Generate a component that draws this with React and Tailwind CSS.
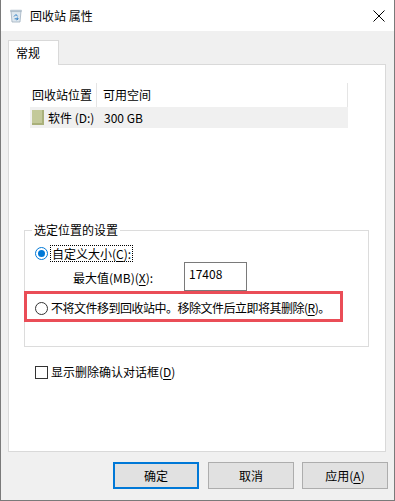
import React from 'react';

// Windows 10 style "回收站 属性" dialog

const RecycleIcon = () => (
  <svg width="14" height="15" viewBox="0 0 14 15">
    <path d="M2 3 L12 3 L11 14 L3 14 Z" fill="#dfe8ef" stroke="#9fb0bf" strokeWidth="0.8" />
    <path d="M1.5 2.2 L12.5 2.2 L12.3 3.6 L1.7 3.6 Z" fill="#c9d6e0" stroke="#9fb0bf" strokeWidth="0.6" />
    <path d="M5 8.5 L7 6.5 L8.6 8.4 M5.6 10.8 L8.6 10.8 M8.2 9.4 L9.2 11 L7.4 11.9" fill="none" stroke="#2f7fc4" strokeWidth="1" />
  </svg>
);

const Radio = ({ checked }) => (
  <span
    className={`flex h-[13px] w-[13px] shrink-0 items-center justify-center rounded-full border bg-white ${
      checked ? 'border-[#0078d7]' : 'border-[#333333]'
    }`}
  >
    {checked && <span className="h-[7px] w-[7px] rounded-full bg-[#0078d7]" />}
  </span>
);

const U = ({ children }) => <span className="underline underline-offset-2">{children}</span>;

const Button = ({ children, primary }) => (
  <div
    className={`flex h-[27px] w-[86px] items-center justify-center bg-[#e1e1e1] ${
      primary ? 'border-2 border-[#0078d7]' : 'border border-[#adadad]'
    }`}
  >
    {children}
  </div>
);

export default function App() {
  return (
    <div className="flex h-[501px] w-[395px] flex-col border-x border-b border-[#7a7a7a] bg-[#f0f0f0] font-['Microsoft_YaHei','Noto_Sans_CJK_SC',sans-serif] text-[12px] leading-[16px] text-black">
      {/* title bar */}
      <div className="flex h-[31px] shrink-0 items-center bg-white">
        <div className="ml-[8px] flex w-[14px] justify-center">
          <RecycleIcon />
        </div>
        <span className="ml-[7px]">回收站 属性</span>
        <div className="ml-auto mr-[9px] flex h-[12px] w-[12px] items-center justify-center">
          <svg width="12" height="12" viewBox="0 0 12 12">
            <path d="M0.5 0.5 L11.5 11.5 M11.5 0.5 L0.5 11.5" stroke="#000" strokeWidth="1" />
          </svg>
        </div>
      </div>

      {/* tabs + panel */}
      <div className="flex flex-col pl-[7px] pr-[8px]">
        <div className="mt-[9px] flex">
          <div className="relative z-10 -mb-px flex h-[25px] w-[51px] items-start border-x border-t border-[#d9d9d9] bg-white pl-[7px] pt-[4px]">
            常规
          </div>
        </div>
        <div className="flex h-[388px] flex-col border border-[#d9d9d9] bg-white">
          {/* list view */}
          <div className="ml-[21px] mt-[18px] flex w-[318px] flex-col">
            <div className="flex h-[24px] items-center">
              <div className="flex h-full w-[67px] items-center border-r border-[#e5e5e5] pl-[2px]">回收站位置</div>
              <div className="flex h-full flex-1 items-center border-r border-[#e5e5e5] pl-[6px]">可用空间</div>
            </div>
            <div className="flex h-[21px] items-center bg-[#f0f0f0]">
              <div className="flex w-[67px] items-center pl-[2px]">
                <span className="h-[15px] w-[12px] border-b-2 border-r-2 border-[#a9b07a] bg-[#c3c99a]" />
                <span className="ml-[4px]">软件 (D:)</span>
              </div>
              <div className="pl-[7px]">300 GB</div>
            </div>
          </div>

          {/* settings group */}
          <fieldset className="ml-[15px] mt-[94px] w-[345px] border border-[#dcdcdc] pb-[24px] pl-[10px] pt-[7px]">
            <legend className="ml-[-3px] px-[2px]">选定位置的设置</legend>
            <div className="flex h-[16px] items-center">
              <Radio checked />
              <span className="ml-[2px] border border-dotted border-black px-px leading-[15px]">
                自定义大小(<U>C</U>):
              </span>
            </div>
            <div className="mt-[1px] flex items-start">
              <span className="ml-[38px] mt-[8px] w-[111px]">
                最大值(MB)(<U>X</U>):
              </span>
              <div className="h-[29px] w-[63px] border border-[#7a7a7a] pl-[4px] pt-[3px]">17408</div>
            </div>
            <div className="-ml-[11px] flex h-[31px] w-[319px] items-center border-[3px] border-[#ea4d57] pl-[8px] pt-[3px]">
              <Radio />
              <span className="ml-[3px] whitespace-nowrap tracking-[-0.5px]">
                不将文件移到回收站中。移除文件后立即将其删除(<U>R</U>)。
              </span>
            </div>
          </fieldset>

          <div className="ml-[26px] mt-[17px] flex h-[16px] items-center">
            <span className="h-[13px] w-[13px] border border-[#333333] bg-white" />
            <span className="ml-[3px]">
              显示删除确认对话框(<U>D</U>)
            </span>
          </div>
        </div>
      </div>

      {/* buttons */}
      <div className="mt-[10px] flex justify-end gap-[9px] pr-[6px]">
        <Button primary>确定</Button>
        <Button>取消</Button>
        <div className="-ml-px">
          <Button>
            应用(<U>A</U>)
          </Button>
        </div>
      </div>
    </div>
  );
}
